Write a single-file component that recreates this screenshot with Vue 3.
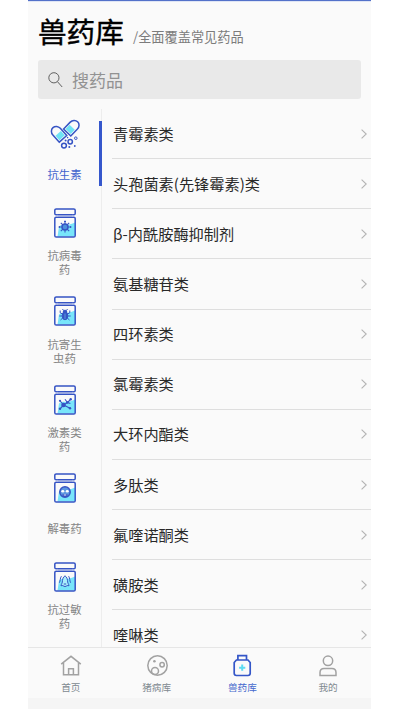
<script setup>
const categories = [
  { name: '抗生素', icon: 'capsule' },
  { name: '抗病毒药', icon: 'virus' },
  { name: '抗寄生虫药', icon: 'bug' },
  { name: '激素类药', icon: 'molecule' },
  { name: '解毒药', icon: 'skull' },
  { name: '抗过敏药', icon: 'allergy' },
]
const drugs = [
  '青霉素类',
  '头孢菌素(先锋霉素)类',
  'β-内酰胺酶抑制剂',
  '氨基糖苷类',
  '四环素类',
  '氯霉素类',
  '大环内酯类',
  '多肽类',
  '氟喹诺酮类',
  '磺胺类',
  '喹啉类',
]
const tabs = [
  { name: '首页', icon: 'home' },
  { name: '猪病库', icon: 'pig' },
  { name: '兽药库', icon: 'bottle' },
  { name: '我的', icon: 'user' },
]
</script>

<template>
  <div class="phone">
    <div class="status"></div>
    <header class="header">
      <h1>兽药库</h1>
      <span class="sub">/全面覆盖常见药品</span>
    </header>
    <div class="search">
      <svg class="glass" viewBox="0 0 16 18" fill="none" stroke="#606060" stroke-width="1">
        <circle cx="5.9" cy="6.8" r="5.1" />
        <path d="M9.4 10.6L14.2 16" />
      </svg>
      <span>搜药品</span>
    </div>
    <div class="content">
      <aside class="side">
        <div v-for="(c, i) in categories" :key="c.name" class="cat" :class="{ active: i === 0 }">
          <svg class="cat-icon" viewBox="0 0 30 30" fill="none" stroke="#3654c4" stroke-width="1.5">
            <g v-if="c.icon === 'capsule'">
              <g transform="translate(7.8 14) rotate(-42)">
                <path d="M-3.6 0.6H3.6V6.4H-3.6Z" fill="#6fe3f5" stroke="none" />
                <path d="M-5 7.8V-1.8A5 5.4 0 0 1 5 -1.8V7.8Z" />
              </g>
              <g transform="translate(22.6 7.9) rotate(44)">
                <path d="M-3.6 0.6H3.6V6.4H-3.6Z" fill="#6fe3f5" stroke="none" />
                <path d="M-5 7.8V-1.8A5 5.4 0 0 1 5 -1.8V7.8Z" />
              </g>
              <circle cx="14" cy="26.6" r="2.4" />
              <circle cx="20.2" cy="22.8" r="2.2" />
              <circle cx="25.8" cy="19.2" r="1.3" stroke-width="1" />
              <g fill="#3654c4" stroke="none">
                <circle cx="15.6" cy="21.6" r="1" />
                <circle cx="19.3" cy="28" r="1" />
                <circle cx="24.8" cy="27" r="0.9" />
                <circle cx="17.6" cy="18.6" r="0.8" />
              </g>
            </g>
            <g v-else>
              <path d="M9 18.5C13 15 16 19 25 14.5V28.5H7.5Z" fill="#78e5fa" stroke="none" />
              <rect x="4.8" y="0.9" width="20.4" height="5.9" rx="1.4" />
              <rect x="4.8" y="9.2" width="20.4" height="19.9" rx="1.4" />
              <path d="M7.2 6.8V9M22.8 6.8V9" stroke="#aeb9e7" stroke-width="1" />
              <g v-if="c.icon === 'virus'" stroke-width="1.1">
                <circle cx="15" cy="19" r="3" fill="#4b91dc" stroke-width="1.5" />
                <path d="M15 16V13.4M15 22V24.6M12 19H9.3M18 19H20.7M12.9 16.9L10.8 14.8M17.1 16.9L19.2 14.8M12.9 21.1L10.8 23.2M17.1 21.1L19.2 23.2M14 13.4H16M9.3 18V20M20.7 18V20" />
              </g>
              <g v-else-if="c.icon === 'bug'" stroke-width="1">
                <ellipse cx="15" cy="19.8" rx="2.8" ry="4" fill="#3654c4" />
                <path d="M13.2 16A1.8 1.8 0 0 1 16.8 16Z" fill="#3654c4" />
                <path d="M13.5 14.5L12.5 13M16.5 14.5L17.5 13M12.5 18L10.2 16.8V14.5M17.5 18L19.8 16.8V14.5M12.2 20H9.3M17.8 20H20.7M12.7 22L10.5 24M17.3 22L19.5 24" />
                <path d="M15 17.5V23" stroke="#72cfee" stroke-width="0.6" />
              </g>
              <g v-else-if="c.icon === 'molecule'" stroke-width="1.1">
                <path d="M13.7 20L17.4 17.5L20.7 14.4M17.4 17.5L15 14.2M13.7 20L10.2 16M13.7 20L10 23.8M13.7 20L20 23.3M17.4 17.5L20.4 18.5" />
                <g fill="#3654c4" stroke="none">
                  <circle cx="13.5" cy="20" r="2.3" />
                  <circle cx="17.3" cy="17.5" r="1.3" />
                  <circle cx="20.7" cy="14.2" r="1.2" />
                  <circle cx="10" cy="15.8" r="1.1" />
                  <circle cx="10" cy="23.7" r="1.2" />
                  <circle cx="20" cy="23.3" r="1.2" />
                </g>
              </g>
              <g v-else-if="c.icon === 'skull'">
                <circle cx="15" cy="19" r="5.2" fill="#5e97e1" />
                <path d="M12.5 21.2H17.5V24H12.5Z" fill="#3654c4" stroke="none" />
                <ellipse cx="12.8" cy="18.2" rx="1.5" ry="1.3" fill="#fff" stroke="none" />
                <ellipse cx="17.2" cy="18.2" rx="1.5" ry="1.3" fill="#fff" stroke="none" />
                <path d="M13.8 22H16.2" stroke="#fff" stroke-width="0.9" />
              </g>
              <g v-else stroke-width="1">
                <path d="M15 13.8C12.8 15 12.5 18 12.3 20C12.2 21.5 11.2 22 11 23.8C12.8 22.8 13.5 24.5 15 24.5C16.5 24.5 17.2 22.8 19 23.8C18.8 22 17.8 21.5 17.7 20C17.5 18 17.2 15 15 13.8Z" fill="#a9eefb" />
                <path d="M11.4 14.2C9.8 16.5 10.6 18.5 9.4 20.7M18.6 14.2C20.2 16.5 19.4 18.5 20.6 20.7" />
                <path d="M13.8 22H16.2" />
              </g>
            </g>
          </svg>
          <div class="cat-label"><span>{{ c.name }}</span></div>
        </div>
      </aside>
      <main class="list">
        <div v-for="d in drugs" :key="d" class="row">
          <span>{{ d }}</span>
          <svg class="chevron" viewBox="0 0 6 10" fill="none" stroke="#b4b4b4" stroke-width="1.1">
            <path d="M0.6 0.6L5.2 5L0.6 9.4" />
          </svg>
        </div>
      </main>
    </div>
    <nav class="tabs">
      <div v-for="t in tabs" :key="t.name" class="tab" :class="{ on: t.icon === 'bottle' }">
        <svg class="tab-icon" viewBox="0 0 24 24" fill="none" stroke="#a2a2a2" stroke-width="1.5">
          <g v-if="t.icon === 'home'">
            <path d="M2.2 10.2L12 2.3L21.8 10.2M4.5 9V20.7H19.5V9M9.6 20.5V14.8H14.4V20.5" />
          </g>
          <g v-else-if="t.icon === 'pig'">
            <circle cx="12.5" cy="11.5" r="9.7" />
            <circle cx="10" cy="17" r="3.5" />
            <circle cx="17.1" cy="10.7" r="2.2" />
            <circle cx="9.4" cy="7.3" r="1.3" fill="#a2a2a2" stroke="none" />
          </g>
          <g v-else-if="t.icon === 'bottle'" stroke="#3456c8" stroke-width="1.7">
            <path d="M7.9 6V1.6H16.5V6M6.4 6H18L20.2 8.5V19.3Q20.2 21.5 18 21.5H6.4Q4.2 21.5 4.2 19.3V8.5Z" />
            <path d="M12.2 10.6V16.8M9.1 13.7H15.3" stroke="#5ddcf2" stroke-width="2" />
          </g>
          <g v-else>
            <circle cx="12" cy="6.8" r="4.7" />
            <path d="M4 21.5V18.6Q4 14.5 8.1 14.5H15.9Q20 14.5 20 18.6V21.5Z" />
          </g>
        </svg>
        <span>{{ t.name }}</span>
      </div>
    </nav>
    <div class="system"></div>
  </div>
</template>

<style>
body {
  background: #fff;
}
</style>

<style scoped>
.phone {
  box-sizing: border-box;
  width: 343px;
  height: 710px;
  margin-left: 28px;
  display: flex;
  flex-direction: column;
  overflow: hidden;
  background: #fafafa;
  font-family: "Noto Sans CJK SC", sans-serif;
}
.status {
  flex: none;
  height: 1px;
  background: #5371c9;
  border-bottom: 1px solid #dfe5f5;
}
.header {
  flex: none;
  height: 58px;
  display: flex;
  padding-left: 10px;
}
h1 {
  margin: 0;
  padding-top: 7px;
  width: 95px;
  box-sizing: border-box;
  font-size: 28.6px;
  font-weight: 400;
  line-height: 44px;
  color: #000;
  -webkit-text-stroke: 0.4px #000;
}
.sub {
  padding-top: 25px;
  font-size: 13.2px;
  line-height: 20px;
  color: #7c7c7c;
}
.search {
  flex: none;
  height: 39px;
  margin: 0 10px;
  display: flex;
  align-items: center;
  background: #e9e9e9;
  border-radius: 3px;
  font-size: 17px;
  color: #929292;
}
.search span {
  padding-bottom: 1px;
}
.glass {
  width: 16px;
  height: 18px;
  margin: 0 8px 0 10px;
}
.content {
  flex: none;
  height: 548px;
  box-sizing: border-box;
  padding-top: 10px;
  display: flex;
  overflow: hidden;
}
.side {
  width: 74px;
  box-sizing: border-box;
  border-right: 1px solid #ededed;
}
.cat {
  height: 88.5px;
  box-sizing: border-box;
  padding-top: 10px;
  display: flex;
  flex-direction: column;
  align-items: center;
  color: #858585;
  position: relative;
}
.cat-icon {
  width: 30px;
  height: 30px;
  margin-left: 1px;
  flex: none;
}
.cat-label {
  width: 36px;
  height: 28px;
  margin-top: 10.5px;
  display: flex;
  align-items: center;
  justify-content: center;
  text-align: center;
  font-size: 11.4px;
  line-height: 14px;
}
.active {
  color: #3f62cd;
}
.active::after {
  content: "";
  position: absolute;
  right: -1px;
  top: 12px;
  width: 3px;
  height: 65px;
  background: #3557cc;
}
.list {
  flex: 1;
  padding-left: 10px;
}
.row {
  height: 50.15px;
  box-sizing: border-box;
  border-bottom: 1px solid #dedede;
  display: flex;
  align-items: center;
  justify-content: space-between;
  padding: 0 4px 0 1px;
  font-size: 15.2px;
  color: #292929;
}
.row span {
  padding-bottom: 2px;
}
.chevron {
  width: 6px;
  height: 10px;
}
.tabs {
  flex: none;
  height: 51px;
  box-sizing: border-box;
  border-top: 1px solid #e6e6e6;
  display: grid;
  grid-template-columns: repeat(4, 1fr);
}
.tab {
  display: flex;
  flex-direction: column;
  align-items: center;
  padding-top: 6px;
  font-size: 9.6px;
  line-height: 14px;
  color: #808990;
}
.tab-icon {
  width: 24px;
  height: 24px;
  margin-bottom: 2px;
}
.on {
  color: #4569cd;
}
.system {
  flex: 1;
  background: #f5f5f5;
  border-bottom: 1px solid #fff;
}
</style>
